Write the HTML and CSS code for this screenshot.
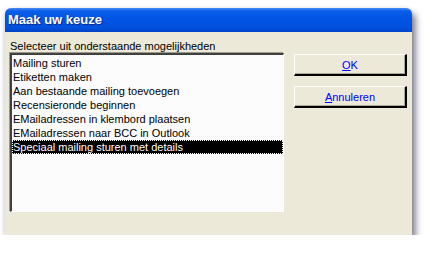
FILE: index.html
```html
<!DOCTYPE html>
<html lang="nl">
<head>
    <meta charset="UTF-8">
    <title>Maak uw keuze</title>
    <link rel="stylesheet" href="styles.css">
</head>
<body>
    <div class="window">
        <div class="titlebar">Maak uw keuze</div>
        <div class="content">
            <div class="prompt">Selecteer uit onderstaande mogelijkheden</div>
            <ul class="listbox">
                <li>Mailing sturen</li>
                <li>Etiketten maken</li>
                <li>Aan bestaande mailing toevoegen</li>
                <li>Recensieronde beginnen</li>
                <li>EMailadressen in klembord plaatsen</li>
                <li>EMailadressen naar BCC in Outlook</li>
                <li class="selected">Speciaal mailing sturen met details</li>
            </ul>
            <div class="buttons">
                <button><u>O</u>K</button>
                <button><u>A</u>nnuleren</button>
            </div>
        </div>
    </div>
</body>
</html>
```

FILE: styles.css
```css
body {
    margin: 0;
    background: #ffffff;
    font-family: "Liberation Sans", Arial, sans-serif;
    font-size: 11px;
}
.window {
    margin: 8px 0 0 5px;
    width: 407px;
    height: 227px;
    background: #ece9d8;
    border-radius: 6px 6px 0 0;
    box-shadow: 4px 5px 6px rgba(70, 70, 95, 0.65), -1px 1px 4px rgba(70, 70, 95, 0.2);
}
.titlebar {
    height: 24px;
    line-height: 24px;
    padding-left: 3px;
    color: #ffffff;
    font-size: 13px;
    font-weight: bold;
    border-radius: 6px 6px 0 0;
    background: linear-gradient(to bottom, #4a8cf6 0px, #0a5ee9 3px, #0055e5 10px, #0050dd 20px, #0043c4 24px);
    text-shadow: 1px 1px 0 #0a2a8a;
}
.content {
    display: grid;
    grid-template-columns: 274px 113px;
    grid-template-rows: 14px 159px;
    column-gap: 10px;
    padding: 7px 0 0 5px;
}
.prompt {
    grid-column: 1 / 3;
    line-height: 14px;
    color: #000000;
}
.listbox {
    margin: 0;
    padding: 1px 0 0 0;
    list-style: none;
    background: #fcfcfc;
    border-style: solid;
    border-width: 2px 1px 1px 2px;
    border-color: #404040 #ffffff #ffffff #404040;
    box-shadow: -1px -1px 0 #9c9a8c;
    box-sizing: border-box;
}
.listbox li {
    height: 14px;
    line-height: 14px;
    padding-left: 1px;
    color: #000000;
    white-space: nowrap;
}
.listbox li.selected {
    background: #000000;
    color: #ffffff;
    outline: 1px dotted #ffffff;
    outline-offset: -1px;
}
.buttons {
    display: flex;
    flex-direction: column;
    gap: 10px;
    padding-top: 1px;
}
button {
    height: 22px;
    margin: 0;
    padding: 0;
    background: #ece9d8;
    color: #0000ff;
    font-family: "Liberation Sans", Arial, sans-serif;
    font-size: 11px;
    border-style: solid;
    border-width: 1px 2px 2px 1px;
    border-color: #ffffff #000000 #000000 #ffffff;
    box-shadow: inset -1px -1px 0 #aca899;
}
```
